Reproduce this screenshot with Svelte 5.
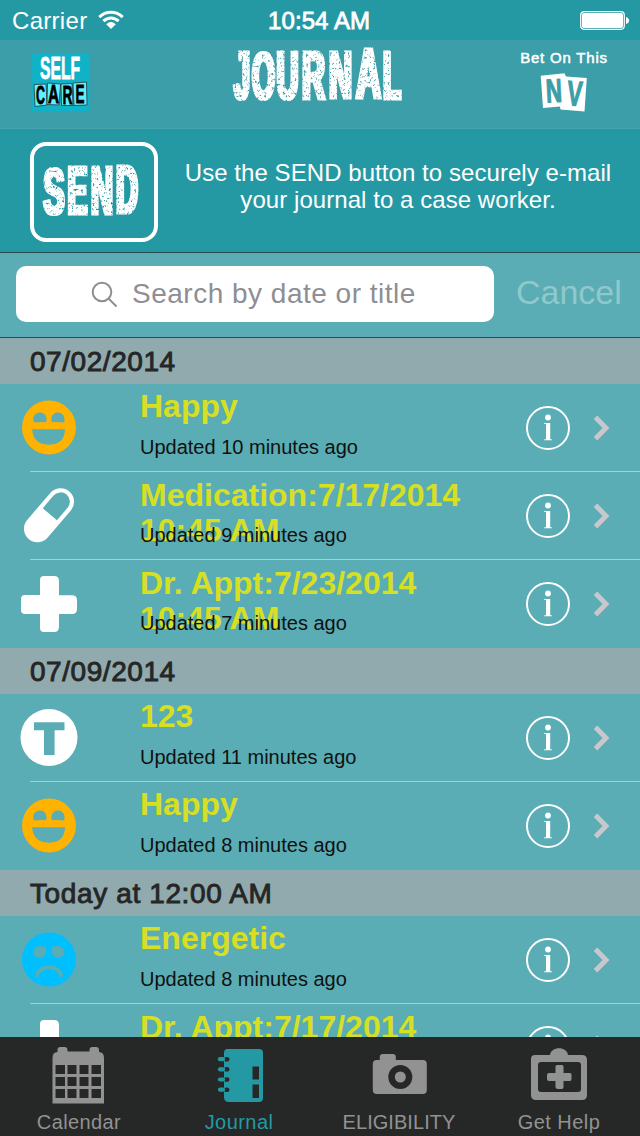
<script>
  const sections = [
    {
      date: '07/02/2014', spacing: 0.55,
      rows: [
        { icon: 'happy', lines: ['Happy'], updated: 'Updated 10 minutes ago' },
        { icon: 'pill', lines: ['Medication:7/17/2014', '10:45 AM'], updated: 'Updated 9 minutes ago' },
        { icon: 'plus', lines: ['Dr. Appt:7/23/2014', '10:45 AM'], updated: 'Updated 7 minutes ago' }
      ]
    },
    {
      date: '07/09/2014', spacing: 0.55,
      rows: [
        { icon: 'text', lines: ['123'], updated: 'Updated 11 minutes ago' },
        { icon: 'happy', lines: ['Happy'], updated: 'Updated 8 minutes ago' }
      ]
    },
    {
      date: 'Today at 12:00 AM', spacing: 0.62,
      rows: [
        { icon: 'sad', lines: ['Energetic'], updated: 'Updated 8 minutes ago' },
        { icon: 'plus', lines: ['Dr. Appt:7/17/2014'], updated: '' }
      ]
    }
  ];
  const tabs = [
    { id: 'calendar', label: 'Calendar', spacing: 0.4 },
    { id: 'journal', label: 'Journal', spacing: 0.45 },
    { id: 'camera', label: 'ELIGIBILITY', spacing: 0.05 },
    { id: 'help', label: 'Get Help', spacing: 0.45 }
  ];
  // letter, left, baseline, width, cap height
  const journal = [
    ['J', 2, 57.5, 16, 48], ['O', 20, 57.5, 23, 47], ['U', 44.5, 57.5, 22, 48], ['R', 70, 57.5, 23, 48],
    ['N', 97, 57, 23, 47], ['A', 124, 57, 25, 49], ['L', 151, 57.5, 18, 48]
  ];
  const send = [['S', 13.5, 67.5, 21, 46], ['E', 37.5, 68, 20, 48], ['N', 61, 67.5, 22, 48], ['D', 86, 67, 22, 48]];
</script>

{#snippet stamp(letters)}
  {#each letters as [ch, x, y, w, h]}
    <text transform={`translate(${x} ${y})`} font-size={h / 0.7} textLength={w} lengthAdjust="spacingAndGlyphs">{ch}</text>
  {/each}
{/snippet}

{#snippet entryIcon(kind)}
  <svg class="entry-icon" viewBox="0 0 60 60">
    {#if kind === 'happy'}
      <path fill="#ffb300" fill-rule="evenodd" d="M30 2.5a27 27 0 1 0 0 54a27 27 0 1 0 0-54zM16 24.5q-1.8-.2-1.8-2.8c0-9.5 13.4-9.8 13.4-.3q0 2.8-1.8 2.8q-5-.3-9.8.3zM34 24.2q-1.6 0-1.6-2.8c0-9.5 13.2-9.2 13.2.3q0 2.6-1.6 2.8q-5-.6-10-.3zM13.2 31.3H46C45.6 40 42 46.7 30 46.7S13.6 40 13.2 31.3z" />
    {:else if kind === 'sad'}
      <path fill="#00bfff" d="M30 2.5a27 27 0 1 0 0 54a27 27 0 1 0 0-54z" />
      <path fill="#5aadb4" d="M14.3 22c.2-3.7 3.5-6 8.5-6 3.5 0 4.5 1 4.5 3.4 0 5-2.8 8.300-6.500 8.300-3.700 0-6.700-2.400-6.500-5.700zM45.600 22c-.2-3.700-3.500-6-8.500-6-3.500 0-4.500 1-4.500 3.400 0 5 2.800 8.300 6.500 8.300 3.700 0 6.700-2.400 6.500-5.700z" />
      <path fill="none" stroke="#5aadb4" stroke-width="4" stroke-linecap="round" d="M18 45.300C21 34.500 39.500 34.500 42 45.300" />
    {:else if kind === 'pill'}
      <path transform="translate(30 29.200) rotate(40.500)" fill="#fff" fill-rule="evenodd" d="M-13.500-17.800A13.500 13.500 0 0 1 13.500-17.800V17.800A13.500 13.500 0 0 1-13.500 17.800ZM-9.300-17.800V-1.300H9.300V-17.800A9.300 9.300 0 0 0-9.300-17.800Z" />
    {:else if kind === 'plus'}
      <path fill="#fff" d="M25 2h10q5 0 5 5v14.300h13q5 0 5 5V35q0 5-5 5H40v13q0 5-5 5H25q-4 0-4-4V40H6q-4 0-4-4V25q0-4 4-4h15V6q0-4 4-4z" />
    {:else}
      <path fill="#fff" fill-rule="evenodd" d="M30 1a28.500 28.500 0 1 0 0 57a28.500 28.500 0 1 0 0-57zM15 14.300H45.500V22.300H35.600V47H25V22.300H15z" />
    {/if}
  </svg>
{/snippet}

<svg class="defs" width="0" height="0" aria-hidden="true">
  <filter id="worn" x="-5%" y="-5%" width="110%" height="110%" color-interpolation-filters="sRGB">
    <feMorphology in="SourceGraphic" operator="dilate" radius="1 0.01" result="fat" />
    <feTurbulence type="fractalNoise" baseFrequency="0.43 0.37" numOctaves="4" seed="8" result="n" />
    <feColorMatrix in="n" values="0 0 0 0 1  0 0 0 0 1  0 0 0 0 1  5 0 0 0 -1.1" result="m" />
    <feComposite in="fat" in2="m" operator="in" />
  </filter>
</svg>

<div class="screen">
  <div class="status">
    <div class="left">
      <span class="carrier">Carrier</span>
      <svg class="wifi" width="26" height="20" viewBox="0 0 26 20">
        <g fill="none" stroke="#fff" stroke-width="3">
          <path d="M1.300 7.200C8 .7 18 .7 24.700 7.200" />
          <path d="M5.400 11.200C10 6.800 16 6.800 20.600 11.200" />
        </g>
        <path fill="#fff" d="M8.200 14.200q4.800-4.200 9.600 0L13 19z" />
      </svg>
    </div>
    <span class="time">10:54 AM</span>
    <svg class="battery" width="50" height="20" viewBox="0 0 50 20">
      <rect x=".7" y=".7" width="43.600" height="17.600" rx="3.500" fill="none" stroke="#fff" stroke-width="1.200" />
      <rect x="2" y="2" width="41" height="15" rx="2" fill="#fff" />
      <path fill="#fff" d="M46 6q3 1 3 3.500T46 13z" />
    </svg>
  </div>

  <header class="nav">
    <svg class="logo" width="57" height="57" viewBox="0 0 57 57">
      <rect width="57" height="57" fill="#10b2c8" />
      <g class="cond" fill="#fff" stroke="#fff" stroke-width=".8">
        <text x="8" y="25" font-size="31" textLength="40" lengthAdjust="spacingAndGlyphs">SELF</text>
      </g>
      <g fill="#5ff0ff" stroke="#333" stroke-width=".8">
        <path d="M2 30.500l12-.5 1 21-12 1.500z" /><path d="M15.500 29l13 1-1.500 21-12-.5z" />
        <path d="M29 30l11-.5 1 22-11.500 0z" /><path d="M41 29l13.500-1 .5 23-13 .5z" />
      </g>
      <g class="cond" fill="#000" stroke="#000" stroke-width=".8">
        <text x="4" y="49.500" font-size="25" textLength="9" lengthAdjust="spacingAndGlyphs">C</text>
        <text x="16" y="48.500" font-size="25" textLength="11" lengthAdjust="spacingAndGlyphs">A</text>
        <text x="30.500" y="49.500" font-size="25" textLength="10" lengthAdjust="spacingAndGlyphs">R</text>
        <text x="43.500" y="48.500" font-size="26" textLength="9" lengthAdjust="spacingAndGlyphs">E</text>
      </g>
    </svg>
    <svg class="title cond" width="172" height="70" viewBox="0 0 172 70" fill="#fff" stroke="#fff" stroke-width="3">
      <g filter="url(#worn)">{@render stamp(journal)}</g>
    </svg>
    <div class="bet">
      <span>Bet On This</span>
      <svg width="48" height="40" viewBox="0 0 48 40">
        <path fill="#fff" d="M.7 3.700L24.500 1.200 26 4.500 46.800 6 44.500 39.500 20.500 37.500 20 34.500 3 36z" />
        <g class="cond" fill="#3b9ea8" stroke="#3b9ea8" stroke-width="1.200">
          <text transform="translate(6.500 30.500) rotate(-3)" font-size="33" textLength="16" lengthAdjust="spacingAndGlyphs">N</text>
          <text transform="translate(26.500 33) rotate(4)" font-size="35" textLength="15" lengthAdjust="spacingAndGlyphs">V</text>
        </g>
        <path fill="none" stroke="#fff" stroke-width="2" d="M23 5l2 30" />
      </svg>
    </div>
  </header>

  <div class="sendbar">
    <button>
      <svg class="cond" width="128" height="100" viewBox="0 0 128 100" fill="#fff" stroke="#fff" stroke-width="3">
        <g filter="url(#worn)" transform="translate(0 4)">{@render stamp(send)}</g>
      </svg>
    </button>
    <p>Use the SEND button to securely e-mail<br />your journal to a case worker.</p>
  </div>

  <div class="search">
    <div class="field">
      <svg width="27" height="27" viewBox="0 0 27 27" fill="none" stroke="#8e8e93" stroke-width="2">
        <circle cx="11" cy="11" r="9.300" /><path d="M17.500 17.500l8 8" />
      </svg>
      <span>Search by date or title</span>
    </div>
    <span class="cancel">Cancel</span>
  </div>

  <main>
    {#each sections as s}
      <h2 style={`letter-spacing:${s.spacing}px`}>{s.date}</h2>
      {#each s.rows as r, i}
        <div class="row" class:last={i === s.rows.length - 1}>
          {@render entryIcon(r.icon)}
          <div class="copy">
            <div class="name" class:two={r.icon === 'pill' || r.icon === 'plus'}>
              {#each r.lines as l}<div>{l}</div>{/each}
            </div>
            <div class="updated">{r.updated}</div>
          </div>
          <svg class="info" width="44" height="44" viewBox="0 0 44 44">
            <circle cx="22" cy="22" r="21" fill="none" stroke="#fff" stroke-width="2" />
            <circle cx="22" cy="11.500" r="2.900" fill="#fff" />
            <path fill="#fff" d="M18 17h6.200v16.300l2 .2v.8H18v-.8l2-.2V18l-2-.2z" />
          </svg>
          <svg class="chev" width="20" height="28" viewBox="0 0 20 28">
            <path d="M4.500 3.200L15 14 4.500 24.800" fill="none" stroke="#c7c7cc" stroke-width="5" />
          </svg>
        </div>
      {/each}
    {/each}
  </main>

  <nav class="tabs">
    {#each tabs as t}
      <div class="tab" class:active={t.id === 'journal'}>
        <svg width="60" height="60" viewBox="0 0 60 60" fill="currentColor">
          {#if t.id === 'calendar'}
            <path fill-rule="evenodd" d="M3.500 13q0-6 5-6V5q0-3 3-3h4q3 0 3 3v1.500h22V5q0-3 3-3h3.500q3 0 3 3v2q5 0 5 6v45.500H3.500zM6.500 20v9H16v-9zM18.500 20v9h9v-9zM30.500 20v9h9v-9zM42.500 20v9h9.500v-9zM6.500 32v9H16v-9zM18.500 32v9h9v-9zM30.500 32v9h9v-9zM42.500 32v9h9.500v-9zM6.500 44v9H16v-9zM18.500 44v9h9v-9zM30.500 44v9h9v-9zM42.500 44v9h9.500v-9z" />
          {:else if t.id === 'journal'}
            <path d="M18.500 4H50q4 0 4 4v45q0 4-4 4H20q-5 0-5-5V8q0-4 3.500-4z" />
            {#each [14.2, 24.3, 34.5, 44.7] as y}
              <ellipse cx="17.600" cy={y} rx="2.800" ry="2.300" fill="#262827" />
              <path d={`M11 ${y}h3`} stroke="currentColor" stroke-width="4.200" stroke-linecap="round" />
            {/each}
            <path fill="#262827" d="M43.500 21.500h6.500v13h-6.500zM43.500 39.500h6.500v13.500h-6.500z" />
          {:else if t.id === 'camera'}
            <g transform="translate(.8 0)">
              <path fill-rule="evenodd" d="M7 15h3V12q0-3 3-3h10q3 0 3 3v3h27q4 0 4 4v26q0 4-4 4H7q-4 0-4-4V19q0-4 4-4zM30.500 20a12 12 0 1 0 0 24a12 12 0 1 0 0-24z" />
              <circle cx="30.500" cy="32" r="5.500" />
            </g>
          {:else}
            <path fill-rule="evenodd" d="M6 10h15c1-9 17-9 18 0h14q5 0 5 5v35q0 5-5 5H7q-5 0-5-5V14q0-4 4-4zM12 17q-3 0-3 3v24q0 3 3 3h37q3 0 3-3V20q0-3-3-3z" />
            <path d="M28 20h5q1.500 0 1.500 1.500v6.500H41q1.500 0 1.500 1.500v4.500q0 2-1.500 2h-6.500V42q0 2-1.500 2h-4q-2.500 0-2.500-2v-6H20q-2 0-2-2v-4q0-2 2-2h6.500v-6.500q0-1.500 1.500-1.500z" />
          {/if}
        </svg>
        <span style={`letter-spacing:${t.spacing}px`}>{t.label}</span>
      </div>
    {/each}
  </nav>
</div>

<style>
  :global(body) { margin: 0; overflow: hidden; }
  .defs { display: block; position: absolute; }
  .screen {
    width: 640px; height: 1136px; display: flex; flex-direction: column; overflow: hidden;
    background: #5aadb4; font-family: "Liberation Sans", Arial, sans-serif; color: #fff;
  }
  svg { display: block; flex: none; }
  .cond { font-family: "Liberation Sans", Arial, sans-serif; font-weight: 700; }
  .status {
    height: 40px; flex: none; display: grid; grid-template-columns: 268px 312px 60px;
    background: #2499a4; font-size: 24px; line-height: 42px;
  }
  .left { display: flex; }
  .carrier { width: 86px; padding-left: 12px; letter-spacing: 0.3px; }
  .wifi { margin-top: 10px; }
  .time { -webkit-text-stroke: 0.8px #fff; letter-spacing: 0.1px; }
  .battery { margin-top: 11px; }
  .nav {
    height: 89px; flex: none; box-sizing: border-box; background: #3b9ea8; border-bottom: 1px solid #46a5ae;
    display: grid; grid-template-columns: 232px 172px 1fr;
  }
  .logo { margin: 14px 0 0 32px; }
  .title { margin-top: 1px; }
  .bet { display: flex; flex-direction: column; align-items: center; padding-left: 80px; width: 160px; }
  .bet span { font-size: 15px; letter-spacing: 0.8px; line-height: 18px; margin: 9px 0 5px; -webkit-text-stroke: 0.5px #fff; white-space: nowrap; }
  .sendbar {
    height: 110px; flex: none; background: #2499a4; border-bottom: 1px solid #274c50;
    display: flex; padding: 13px 0 0 30px;
  }
  button {
    width: 128px; height: 100px; flex: none; padding: 0; border: 4px solid #fff; border-radius: 16px;
    background: none; overflow: hidden; display: flex; align-items: center; justify-content: center;
  }
  p { margin: 17px 0 0 11px; width: 458px; text-align: center; font-size: 24px; line-height: 27px; letter-spacing: 0.06px; }
  .search { height: 84px; flex: none; display: flex; padding-left: 16px; border-bottom: 1px solid #274c50; }
  .field {
    width: 478px; height: 56px; margin-top: 13px; border-radius: 10px; background: #fff; color: #8e8e93;
    display: flex; align-items: center; font-size: 28px; letter-spacing: 0.5px;
  }
  .field svg { margin: 0 14px 0 75px; }
  .cancel { font-size: 34px; line-height: 40px; margin: 19px 0 0 22px; color: #90c8cd; }
  main { flex: 1; min-height: 0; overflow: hidden; }
  h2 {
    margin: 0; height: 46px; padding-left: 30px; background: #91aaad; color: #252626;
    font-size: 28px; font-weight: 400; line-height: 47px; -webkit-text-stroke: 0.9px #252626;
  }
  .row { height: 88px; display: flex; position: relative; }
  .row:not(.last)::after { content: ""; position: absolute; left: 30px; right: 0; bottom: 0; height: 1px; background: #b7c9cd; }
  .entry-icon { width: 60px; height: 60px; margin: 14px 61px 0 19px; }
  .copy { width: 386px; flex: none; display: grid; grid-template-rows: 88px; }
  .name { grid-area: 1 / 1; padding-top: 5px; font-size: 32px; line-height: 35px; font-weight: 700; color: #d7df23; }
  .name.two { padding-top: 6px; }
  .updated { grid-area: 1 / 1; align-self: start; margin-top: 52px; font-size: 20px; line-height: 23px; color: #111; }
  .info { margin-top: 22px; }
  .chev { margin: 30px 0 0 21px; }
  .tabs {
    height: 99px; flex: none; display: grid; grid-template-columns: repeat(4, 160px);
    background: #262827;
  }
  .tab { display: flex; flex-direction: column; align-items: center; width: 158px; color: #929292; padding-top: 8px; box-sizing: border-box; }
  .tab.active { color: #2499a4; }
  .tab span { font-size: 20px; line-height: 23px; margin-top: 6px; }
</style>
